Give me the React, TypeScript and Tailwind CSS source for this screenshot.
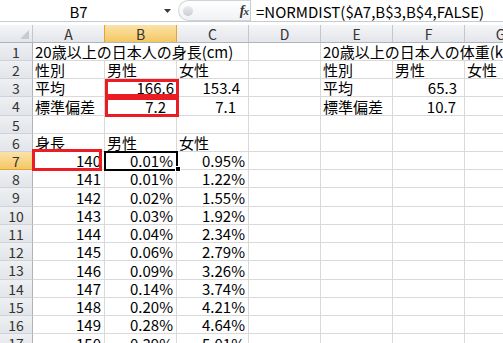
import React from "react";

type Cell = { v?: string; align?: "l" | "r"; pr?: string };

const heights = [18, 18, 18, 19, 18, 18, 18, 18, 19, 18, 18, 18, 19, 18, 18, 18, 19];

const cols = ["A", "B", "C", "D", "E", "F", "G"];

const male = ["0.01%", "0.01%", "0.02%", "0.03%", "0.04%", "0.06%", "0.09%", "0.14%", "0.20%", "0.28%", "0.39%"];
const female = ["0.95%", "1.22%", "1.55%", "1.92%", "2.34%", "2.79%", "3.26%", "3.74%", "4.21%", "4.64%", "5.01%"];

const rows: Cell[][] = [
  [],
  [{ v: "性別" }, { v: "男性" }, { v: "女性" }, {}, { v: "性別" }, { v: "男性" }, { v: "女性" }],
  [{ v: "平均" }, { v: "166.6", align: "r", pr: "pr-[2px]" }, { v: "153.4", align: "r", pr: "pr-[8px]" }, {}, { v: "平均" }, { v: "65.3", align: "r", pr: "pr-[7px]" }, {}],
  [{ v: "標準偏差" }, { v: "7.2", align: "r", pr: "pr-[10px]" }, { v: "7.1", align: "r", pr: "pr-[12px]" }, {}, { v: "標準偏差" }, { v: "10.7", align: "r", pr: "pr-[8px]" }, {}],
  [{}, {}, {}, {}, {}, {}, {}],
  [{ v: "身長" }, { v: "男性" }, { v: "女性" }, {}, {}, {}, {}],
  ...male.map((m, i) => [
    { v: String(140 + i), align: "r" as const },
    { v: m, align: "r" as const },
    { v: female[i], align: "r" as const },
    {},
    {},
    {},
    {},
  ]),
];

function GridCell({ c }: { c: Cell }) {
  return (
    <div
      className={`w-[72px] shrink-0 h-full border-r border-b border-[#d9d9d9] flex items-center whitespace-nowrap overflow-hidden ${
        c.align === "r" ? "justify-end " + (c.pr ?? "pr-[3px]") : "pl-[2px]"
      }`}
    >
      {c.v}
    </div>
  );
}

export default function App() {
  return (
    <div className="w-[503px] h-[343px] overflow-hidden bg-white relative font-['Noto_Sans_CJK_JP','Liberation_Sans',sans-serif] text-[15px] leading-none text-black">
      {/* formula bar */}
      <div className="flex h-[22px] border-b border-[#c6cbd2] items-center">
        <div className="w-[157px] text-center pt-[1px]">B7</div>
        <div className="w-[21px] flex justify-center">
          <svg width="7" height="4" viewBox="0 0 7 4">
            <path d="M0 0h7L3.5 4z" fill="#3a3a3a" />
          </svg>
        </div>
        <div className="w-[72px] h-[21px] flex items-center rounded-l-full border border-r-0 border-[#d0d4da] bg-gradient-to-b from-white to-[#f1f2f4]">
          <div className="ml-[4px] w-[10px] h-[10px] rounded-full bg-gradient-to-b from-[#e9ebee] to-[#c9cdd3]" />
          <div className="ml-auto mr-[2px] font-['Liberation_Serif',serif] italic font-bold text-[14px] text-[#333] tracking-[-1px]">
            f<span className="text-[11px]">x</span>
          </div>
        </div>
        <div className="h-full border-l border-[#c6cbd2] pl-[5px] flex items-center pt-[1px] whitespace-nowrap">
          =NORMDIST($A7,B$3,B$4,FALSE)
        </div>
      </div>
      <div className="h-[3px]" />

      {/* sheet */}
      <div className="relative">
        <div className="flex h-[18px] border-b border-[#aeb4bc] text-[14px] text-[#333]">
          <div className="w-[33px] shrink-0 border-r border-[#c3c8ce] bg-gradient-to-b from-[#f4f5f7] to-[#e3e6ea] relative">
            <svg className="absolute right-[3px] bottom-[3px]" width="9" height="9" viewBox="0 0 9 9">
              <path d="M9 0v9H0z" fill="#c7cbd1" />
            </svg>
          </div>
          {cols.map((c) => (
            <div
              key={c}
              className={`w-[72px] shrink-0 flex items-center justify-center border-r ${
                c === "B"
                  ? "bg-gradient-to-b from-[#fbe2a8] to-[#f4c760] border-[#e3a33c] border-l -ml-[1px] w-[73px]"
                  : "bg-gradient-to-b from-[#f4f5f7] to-[#e3e6ea] border-[#c3c8ce]"
              }`}
            >
              {c}
            </div>
          ))}
        </div>

        {heights.map((h, i) => {
          const r = i + 1;
          const hc = h === 19 ? "h-[19px]" : "h-[18px]";
          return (
            <div key={r} className={`flex ${hc}`}>
              <div
                className={`w-[33px] shrink-0 h-full flex items-center justify-center border-r border-b text-[14px] text-[#333] ${
                  r === 7
                    ? "bg-gradient-to-b from-[#fbe2a8] to-[#f4c760] border-[#e3a33c]"
                    : "bg-gradient-to-b from-[#eef0f3] to-[#e2e5e9] border-r-[#aeb4bc] border-b-[#cfd3d9]"
                }`}
              >
                {r}
              </div>
              {r === 1 ? (
                <>
                  <div className="w-[216px] shrink-0 h-full border-r border-b border-[#d9d9d9] flex items-center pl-[2px] whitespace-nowrap">
                    20歳以上の日本人の身長(cm)
                  </div>
                  <GridCell c={{}} />
                  <div className="w-[216px] shrink-0 h-full border-b border-[#d9d9d9] flex items-center pl-[2px] whitespace-nowrap overflow-hidden">
                    20歳以上の日本人の体重(kg)
                  </div>
                </>
              ) : (
                (rows[i] ?? []).map((c, j) => <GridCell key={j} c={c} />)
              )}
            </div>
          );
        })}

        {/* red marks drawn on the sheet */}
        <div className="absolute left-[105px] top-[54px] w-[74px] h-[18px] border-[3px] border-[#ec1c24]" />
        <div className="absolute left-[105px] top-[72px] w-[74px] h-[20px] border-[3px] border-[#ec1c24]" />
        <div className="absolute left-[32px] top-[124px] w-[70px] h-[22px] border-[3px] border-[#ec1c24]" />

        {/* active cell B7 */}
        <div className="absolute left-[104px] top-[126px] w-[74px] h-[20px] border-2 border-black" />
        <div className="absolute left-[175px] top-[141px] w-[6px] h-[6px] bg-black border border-white" />
      </div>
    </div>
  );
}
